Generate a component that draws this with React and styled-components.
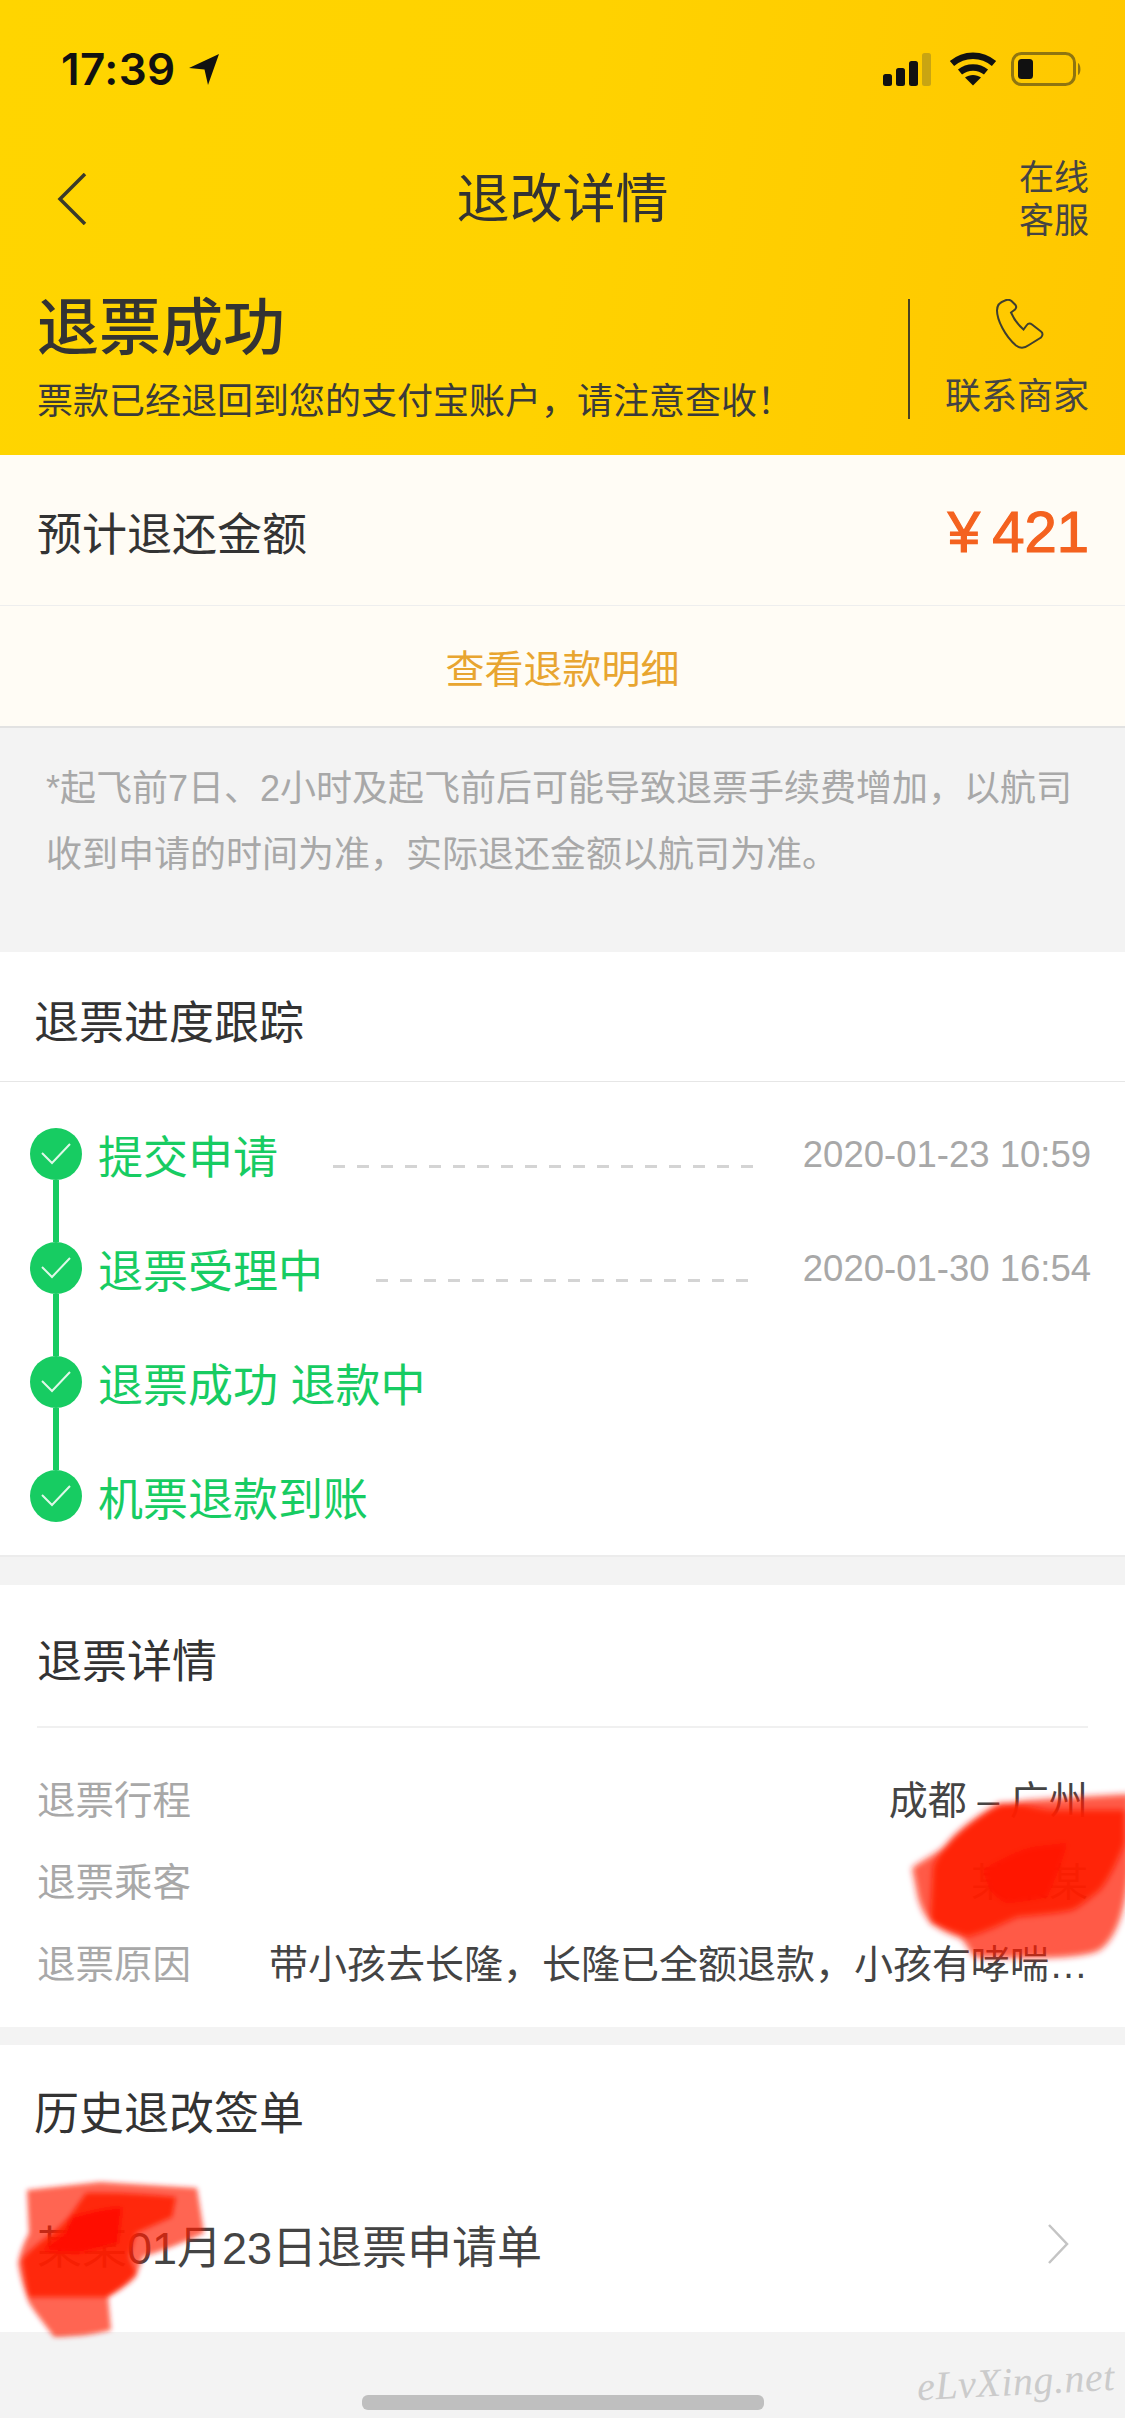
import React from "react";
import styled, { createGlobalStyle } from "styled-components";

const GlobalStyle = createGlobalStyle`
  html, body {
    margin: 0;
    padding: 0;
    background: #f3f3f3;
  }
  body {
    font-family: "Liberation Sans", "Noto Sans CJK SC", sans-serif;
    color: #333;
  }
`;

const Page = styled.div`
  width: 1125px;
  height: 2418px;
  overflow: hidden;
  background: #f3f3f3;
  display: flex;
  flex-direction: column;
`;

const Header = styled.header`
  height: 455px;
  box-sizing: border-box;
  padding-top: 52px;
  background: linear-gradient(100deg, #ffd500 0%, #ffd200 50%, #ffc700 100%);
  display: flex;
  flex-direction: column;
`;

const StatusBar = styled.div`
  height: 34px;
  padding: 0 43px 0 61px;
  display: flex;
  align-items: center;
  justify-content: space-between;
`;

const StatusLeft = styled.div`
  display: flex;
  align-items: center;
  gap: 13px;
`;

const StatusRight = styled.div`
  display: flex;
  align-items: center;
  gap: 14px;
`;

const Time = styled.span`
  font-family: "Inter", "Liberation Sans", sans-serif;
  font-size: 44px;
  font-weight: 600;
  letter-spacing: 0.4px;
  line-height: 34px;
  color: #111;
`;

const NavBar = styled.nav`
  height: 104px;
  margin-top: 61px;
  padding: 0 36px;
  display: grid;
  grid-template-columns: 1fr auto 1fr;
  align-items: center;
`;

const BackIcon = styled.svg`
  margin-left: 21px;
`;

const NavTitle = styled.h1`
  margin: 0;
  padding-top: 2px;
  font-size: 53px;
  font-weight: 400;
  line-height: 60px;
  color: #333;
`;

const NavHelp = styled.div`
  justify-self: end;
  width: 72px;
  font-size: 35px;
  line-height: 43px;
  color: #444;
  text-align: right;
`;

const Summary = styled.div`
  height: 125px;
  margin-top: 45px;
  padding: 0 36px 0 37px;
  display: flex;
  align-items: center;
`;

const SummaryText = styled.div`
  flex: 1;
  display: flex;
  flex-direction: column;
  gap: 20px;
`;

const StatusTitle = styled.div`
  font-size: 62px;
  font-weight: 500;
  line-height: 66px;
  color: #333;
`;

const StatusSub = styled.div`
  font-size: 36px;
  line-height: 40px;
  color: #3a3a3a;
  white-space: nowrap;
`;

const ContactBox = styled.div`
  height: 120px;
  width: 181px;
  box-sizing: border-box;
  border-left: 2px solid #4a4320;
  display: flex;
  flex-direction: column;
  align-items: flex-end;
  justify-content: space-between;
`;

const ContactIcon = styled.svg`
  width: 48px;
  height: 50px;
  margin-right: 45px;
`;

const ContactLabel = styled.div`
  font-size: 36px;
  line-height: 44px;
  color: #444;
`;

const AmountRow = styled.div`
  height: 151px;
  box-sizing: border-box;
  padding: 2px 36px 0 37px;
  background: #fffcf5;
  border-bottom: 1px solid #eeeeee;
  display: flex;
  align-items: center;
  justify-content: space-between;
`;

const AmountLabel = styled.div`
  font-size: 45px;
  color: #333;
`;

const AmountValue = styled.div`
  font-size: 58px;
  font-weight: 400;
  color: #f4621f;
  -webkit-text-stroke: 1.2px #f4621f;
  word-spacing: -4px;
`;

const DetailLink = styled.div`
  height: 122px;
  box-sizing: border-box;
  background: #fffcf5;
  border-bottom: 2px solid #e2e2e2;
  display: flex;
  align-items: center;
  justify-content: center;
  font-size: 39px;
  color: #e8a530;
`;

const Note = styled.p`
  height: 224px;
  margin: 0;
  box-sizing: border-box;
  padding: 28px 40px 0 46px;
  font-size: 36px;
  line-height: 66px;
  color: #a8a8a8;
`;

const Card = styled.section`
  position: relative;
  background: #fff;
  margin-bottom: ${(p) => p.$gap || 0}px;
`;

const TrackTitle = styled.h2`
  height: 130px;
  margin: 0;
  box-sizing: border-box;
  padding: 5px 0 0 34px;
  border-bottom: 1px solid #e6e6e6;
  display: flex;
  align-items: center;
  font-size: 45px;
  font-weight: 400;
  color: #333;
`;

const StepList = styled.div`
  height: 475px;
  box-sizing: border-box;
  padding: 46px 34px 0 30px;
  border-bottom: 2px solid #ececec;
`;

const StepRow = styled.div`
  height: ${(p) => (p.$last ? 52 : 114)}px;
  display: flex;
`;

const Marker = styled.div`
  width: 52px;
  display: flex;
  flex-direction: column;
  align-items: center;
`;

const Dot = styled.span`
  width: 52px;
  height: 52px;
  flex: none;
  border-radius: 50%;
  background: #17cc62;
  display: flex;
  align-items: center;
  justify-content: center;
`;

const Rail = styled.span`
  width: 6px;
  flex: 1;
  background: #17cc62;
`;

const StepBody = styled.div`
  flex: 1;
  height: 52px;
  margin-left: 16px;
  display: flex;
  align-items: center;
`;

const StepLabel = styled.span`
  font-size: 45px;
  color: #17cc62;
  white-space: nowrap;
`;

const Dashes = styled.span`
  flex: 1;
  height: 3px;
  margin: 25px 50px 0 ${(p) => p.$offset}px;
  background: repeating-linear-gradient(90deg, #d4d4d4 0 12px, transparent 12px 24px);
`;

const StepDate = styled.span`
  padding-top: 2px;
  font-size: 36.5px;
  color: #a8a8a8;
  white-space: nowrap;
`;

const DetailCard = styled(Card)`
  height: 442px;
  box-sizing: border-box;
  padding: 0 37px;
`;

const DetailTitle = styled.h2`
  height: 143px;
  margin: 0;
  box-sizing: border-box;
  padding-top: 5px;
  border-bottom: 2px solid #f0f0f0;
  display: flex;
  align-items: center;
  font-size: 45px;
  font-weight: 400;
  color: #333;
`;

const DetailRows = styled.div`
  padding-top: 28px;
  display: flex;
  flex-direction: column;
`;

const DetailRow = styled.div`
  height: 82px;
  display: flex;
  align-items: center;
  justify-content: space-between;
  font-size: 38.5px;
`;

const DetailKey = styled.span`
  color: #a8a8a8;
  flex: none;
`;

const DetailValue = styled.span`
  font-size: 39px;
  color: #444;
  white-space: nowrap;
`;

const HistoryCard = styled(Card)`
  height: 287px;
  box-sizing: border-box;
  padding: 0 56px 0 34px;
`;

const HistoryTitle = styled.h2`
  height: 130px;
  margin: 0;
  display: flex;
  align-items: center;
  font-size: 45px;
  font-weight: 400;
  color: #333;
`;

const HistoryRow = styled.div`
  height: 130px;
  margin-left: 3px;
  margin-top: 4px;
  display: flex;
  align-items: center;
  justify-content: space-between;
  font-size: 45px;
  color: #444;
`;

const Footer = styled.footer`
  position: relative;
  flex: 1;
`;

const HomeBar = styled.div`
  position: absolute;
  left: 362px;
  top: 63px;
  width: 402px;
  height: 15px;
  border-radius: 6px;
  background: #bfbfbf;
`;

const Watermark = styled.div`
  position: absolute;
  right: 10px;
  top: 26px;
  font-family: "Liberation Serif", serif;
  font-style: italic;
  font-size: 40px;
  letter-spacing: 0.5px;
  color: #cbcbcb;
  transform: rotate(-3deg);
`;

const Scribble = styled.svg`
  position: absolute;
  left: ${(p) => p.$left}px;
  top: ${(p) => p.$top}px;
  z-index: 2;
  pointer-events: none;
  overflow: visible;
`;

const Signal = () => (
  <svg width="52" height="33" viewBox="0 0 52 33">
    <rect x="0" y="21" width="9" height="12" rx="2.5" fill="#111" />
    <rect x="13" y="15" width="9" height="18" rx="2.5" fill="#111" />
    <rect x="26" y="8" width="9" height="25" rx="2.5" fill="#111" />
    <rect x="39" y="0" width="9" height="33" rx="2.5" fill="#c9a512" />
  </svg>
);

const Wifi = () => (
  <svg width="48" height="34" viewBox="0 0 48 34" fill="none" stroke="#111" strokeWidth="6.5">
    <path d="M3 11.5C15 1 33 1 45 11.5" />
    <path d="M11 20C18.500 14 29.500 14 37 20" />
    <path d="M24 33.500L16 25.500C20.500 22 27.500 22 32 25.500Z" fill="#111" stroke="none" />
  </svg>
);

const Battery = () => (
  <svg width="71" height="34" viewBox="0 0 71 34">
    <rect x="1.500" y="1.500" width="62" height="31" rx="9" fill="none" stroke="#8f7510" strokeWidth="3" />
    <rect x="7" y="7" width="15" height="20" rx="3.500" fill="#111" />
    <path d="M67 11C70 12 70.500 22 67 23Z" fill="#8f7510" />
  </svg>
);

const Blob1 = () => (
  <Scribble $left={905} $top={1790 - 1585} width="220" height="175" viewBox="905 1790 220 175">
    <defs>
      <filter id="soft1" x="-10%" y="-10%" width="120%" height="120%">
        <feGaussianBlur stdDeviation="3" />
      </filter>
    </defs>
    <g filter="url(#soft1)" fill="#ff1c00">
      <path
        opacity="0.72"
        d="M912 1868C925 1858 945 1850 952 1838C975 1815 1000 1802 1030 1800C1060 1798 1095 1796 1130 1794L1130 1870C1125 1905 1120 1935 1100 1950C1080 1960 1030 1958 975 1958C968 1950 966 1942 960 1938C935 1928 925 1922 918 1898Z"
      />
      <path
        opacity="0.88"
        d="M933 1867C938 1855 945 1845 953 1837C970 1822 985 1810 1000 1803C1020 1802 1035 1808 1050 1810L1125 1810L1125 1843C1118 1860 1110 1878 1100 1890C1090 1898 1082 1905 1073 1910C1055 1914 1035 1915 1017 1917C1000 1925 985 1932 967 1937C955 1933 942 1928 930 1923Z"
      />
      <path
        opacity="0.95"
        fill="#ff1200"
        d="M983 1870C1000 1860 1015 1852 1033 1847L1067 1843C1062 1862 1055 1880 1047 1897C1033 1900 1020 1902 1007 1903C1000 1900 994 1895 990 1890Z"
      />
    </g>
  </Scribble>
);

const Blob2 = () => (
  <Scribble $left={15} $top={2178 - 2045} width="195" height="162" viewBox="15 2178 195 162">
    <defs>
      <filter id="soft2" x="-10%" y="-10%" width="120%" height="120%">
        <feGaussianBlur stdDeviation="2.500" />
      </filter>
    </defs>
    <g filter="url(#soft2)" fill="#ff1c00">
      <path
        opacity="0.68"
        d="M27 2190L100 2182L197 2188L204 2233C185 2242 165 2250 143 2257L136 2277C128 2285 118 2292 108 2297L111 2330C92 2335 72 2337 54 2337C45 2325 37 2315 29 2303C24 2290 20 2277 18 2263C20 2252 24 2242 29 2233Z"
      />
      <path
        opacity="0.85"
        d="M86 2193C115 2192 145 2194 176 2197L172 2217C160 2222 148 2228 136 2233L129 2257L136 2273C128 2282 118 2290 108 2297L29 2297C26 2285 24 2272 22 2260C28 2252 35 2246 43 2240C55 2232 65 2222 72 2213Z"
      />
      <path
        opacity="0.95"
        fill="#ff1000"
        d="M72 2217C88 2212 105 2208 122 2207L118 2243C105 2247 92 2250 79 2253C66 2253 54 2252 43 2250C50 2243 58 2238 65 2233Z"
      />
    </g>
  </Scribble>
);

const Check = () => (
  <svg width="32" height="24" viewBox="0 0 32 24" fill="none" stroke="#dff8e8" strokeWidth="2">
    <path d="M2 11L12 21L30 2" />
  </svg>
);

const steps = [
  { label: "提交申请", date: "2020-01-23 10:59", offset: 55 },
  { label: "退票受理中", date: "2020-01-30 16:54", offset: 53 },
  { label: "退票成功 退款中" },
  { label: "机票退款到账" },
];

const detailRows = [
  { key: "退票行程", value: "成都 – 广州" },
  { key: "退票乘客", value: "某某某" },
  { key: "退票原因", value: "带小孩去长隆\uFF0C长隆已全额退款\uFF0C小孩有哮喘\u2026" },
];

export default function App() {
  return (
    <Page>
      <GlobalStyle />
      <Header>
        <StatusBar>
          <StatusLeft>
            <Time>17:39</Time>
            <svg width="30" height="31" viewBox="0 0 30 31">
              <path d="M30 0L19 31L15.500 15.500L0 14Z" fill="#111" />
            </svg>
          </StatusLeft>
          <StatusRight>
            <Signal />
            <Wifi />
            <Battery />
          </StatusRight>
        </StatusBar>
        <NavBar>
          <BackIcon width="30" height="52" viewBox="0 0 30 52" fill="none" stroke="#3a3a2a" strokeWidth="3.500">
            <path d="M28 1L3 26L28 51" />
          </BackIcon>
          <NavTitle>退改详情</NavTitle>
          <NavHelp>在线 客服</NavHelp>
        </NavBar>
        <Summary>
          <SummaryText>
            <StatusTitle>退票成功</StatusTitle>
            <StatusSub>{"票款已经退回到您的支付宝账户\uFF0C请注意查收\uFF01"}</StatusSub>
          </SummaryText>
          <ContactBox>
            <ContactIcon viewBox="0 0 48 50" fill="none" stroke="#3f3f30" strokeWidth="2">
              <path d="M9 1.500C4 3 1 6.500 1 11.500C1 21 9 37 20 46.500C24 49.500 29 49 33 46L45 38.500C47 36.500 47 34 45 32.500L36 25.500C34 24 32 24.500 30.500 26.500L27.500 30.500C22 26 17 18 15 13.500L19 10.500C20.500 9 20.500 7.500 19.500 6L15.500 2C13.500 0.500 11 0.500 9 1.500Z" />
            </ContactIcon>
            <ContactLabel>联系商家</ContactLabel>
          </ContactBox>
        </Summary>
      </Header>

      <AmountRow>
        <AmountLabel>预计退还金额</AmountLabel>
        <AmountValue>¥ 421</AmountValue>
      </AmountRow>
      <DetailLink>查看退款明细</DetailLink>
      <Note>
        {"*起飞前7日、2小时及起飞前后可能导致退票手续费增加\uFF0C以航司"}
        <br />
        {"收到申请的时间为准\uFF0C实际退还金额以航司为准。"}
      </Note>

      <Card $gap={28}>
        <TrackTitle>退票进度跟踪</TrackTitle>
        <StepList>
          {steps.map((step, i) => {
            const last = i === steps.length - 1;
            return (
              <StepRow key={step.label} $last={last}>
                <Marker>
                  <Dot>
                    <Check />
                  </Dot>
                  {!last && <Rail />}
                </Marker>
                <StepBody>
                  <StepLabel>{step.label}</StepLabel>
                  {step.date && <Dashes $offset={step.offset} />}
                  {step.date && <StepDate>{step.date}</StepDate>}
                </StepBody>
              </StepRow>
            );
          })}
        </StepList>
      </Card>

      <DetailCard $gap={18}>
        <DetailTitle>退票详情</DetailTitle>
        <DetailRows>
          {detailRows.map((row) => (
            <DetailRow key={row.key}>
              <DetailKey>{row.key}</DetailKey>
              <DetailValue>{row.value}</DetailValue>
            </DetailRow>
          ))}
        </DetailRows>
        <Blob1 />
      </DetailCard>

      <HistoryCard>
        <HistoryTitle>历史退改签单</HistoryTitle>
        <HistoryRow>
          <span>某某01月23日退票申请单</span>
          <svg width="22" height="40" viewBox="0 0 22 40" fill="none" stroke="#c4c4c4" strokeWidth="2.500">
            <path d="M2 1L20 20L2 39" />
          </svg>
        </HistoryRow>
        <Blob2 />
      </HistoryCard>

      <Footer>
        <HomeBar />
        <Watermark>eLvXing.net</Watermark>
      </Footer>
    </Page>
  );
}
